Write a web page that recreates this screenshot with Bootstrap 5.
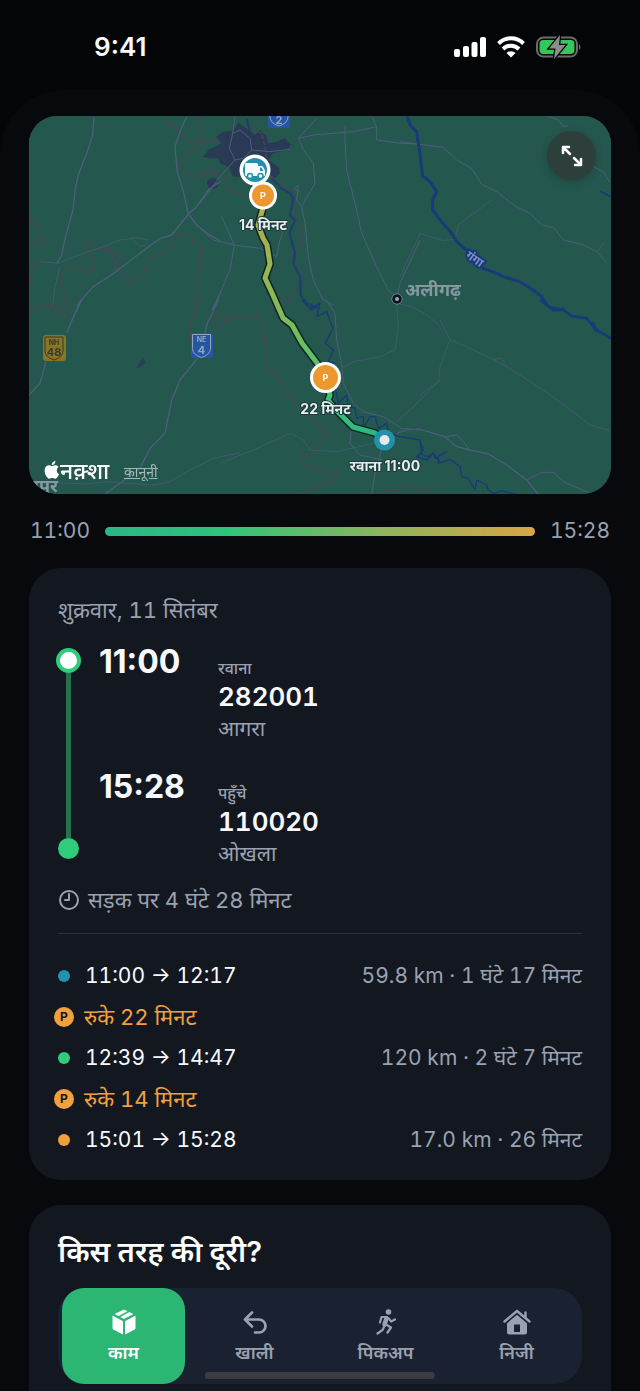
<!DOCTYPE html>
<html lang="hi" data-bs-theme="dark">
<head>
<meta charset="utf-8">
<meta name="viewport" content="width=device-width, initial-scale=1">
<title>यात्रा</title>
<link href="https://cdn.jsdelivr.net/npm/bootstrap@5.3.0/dist/css/bootstrap.min.css" rel="stylesheet">
<style>
  :root { --ink: #f8f9ff; --dim: #9aa1b1; --panel: #131820; --green: #2ecc7b; --amber: #f2a03d; --teal: #2391ab; }
  body { background: #030507; color: var(--ink); font-family: Inter, "Noto Sans", "Noto Sans Devanagari", sans-serif; font-size: 22px; line-height: 28px; }
  svg { display: block; }
  .status { height: 90px; padding: 4px 59px 0 94px; font-size: 26px; font-weight: 600; }
  .sheet { background: #08090d; border-radius: 64px 64px 0 0; padding: 26px 29px 0; }
  .map { border-radius: 28px; overflow: hidden; background: #24574e; }
  .map text { font-weight: 700; }
  .map .brand { font-weight: 500; }
  .expand { top: 15px; right: 15px; width: 49px; height: 49px; background: #2d3f3b; border: 0; box-shadow: 0 2px 8px #0003; }
  .legal { left: 95px; bottom: 12px; font-size: 14px; line-height: 20px; color: #a3bab6; }
  .span-row { height: 74px; gap: 15px; color: var(--dim); padding: 0 1px; font-size: 21px; }
  .span-bar { height: 9px; background: linear-gradient(90deg, #2cb587, #2fc47b 28%, #8fb45c 65%, #dba544); }
  .panel { background: var(--panel); border-radius: 32px; padding: 29px 29px 20px; margin-bottom: 25px; }
  .day { line-height: 26px; }
  .dim { color: var(--dim); }
  .rail { width: 25px; margin-left: -2px; padding: 1px 0 8px; }
  .ring { width: 25px; height: 25px; border: 4px solid var(--green); background: #fff; }
  .rail-line { width: 5px; background: #27704f; }
  .rail-end { width: 21px; height: 21px; background: var(--green); }
  .stops { gap: 30px; margin-left: 18px; }
  .clock { width: 119px; font-size: 32px; line-height: 30px; font-weight: 700; }
  .place { padding-top: 11px; }
  .place-kind { font-size: 16px; line-height: 20px; font-weight: 500; }
  .place-code { font-size: 26px; line-height: 38px; font-weight: 600; }
  .place-city { font-size: 21px; line-height: 26px; }
  .tnum { font-variant-numeric: tabular-nums; }
  .duration { margin-top: 19px; }
  .rule { height: 1px; background: #2a2f3a; margin: 19px 0 21px; }
  .leg { height: 41px; font-size: 21px; }
  .dot { width: 12px; height: 12px; margin-right: 15px; }
  .dot-teal { background: var(--teal); }
  .dot-green { background: var(--green); }
  .dot-amber { background: var(--amber); }
  .stop { color: var(--amber); margin-left: -4px; gap: 10px; font-size: 22px; }
  .pmark { width: 20px; height: 20px; background: var(--amber); color: var(--panel); font-size: 12px; line-height: 20px; font-weight: 700; }
  .ask { font-size: 29px; line-height: 36px; font-weight: 600; margin-bottom: 18px; }
  .seg { background: #1a2130; border-radius: 28px; }
  .seg .btn { --bs-btn-color: var(--dim); --bs-btn-border-width: 0; --bs-btn-hover-color: var(--ink); height: 96px; margin: 0 4px; padding: 21px 0 0; border-radius: 22px; font-size: 18px; line-height: 28px; font-weight: 600; }
  .seg .btn svg { margin: 0 auto 4px; }
  .seg .btn-check:checked + .btn { background: #2bb673; color: #fff; }
  .last { border-radius: 32px 32px 0 0; padding-bottom: 7px; margin-bottom: 0; }
  .home { height: 7px; width: 36%; background: #3a3c41; bottom: 12px; }
</style>
</head>
<body>
<header class="status d-flex align-items-center justify-content-between">
  <span>9:41</span>
  <span class="d-flex align-items-center">
    <svg width="128" height="24" viewBox="0 0 128 24" aria-hidden="true">
      <g fill="#fff"><rect x="1" y="14" width="6" height="8" rx="2"/><rect x="10" y="11" width="6" height="11" rx="2"/><rect x="18.500" y="7" width="6" height="15" rx="2"/><rect x="27" y="2" width="6" height="20" rx="2"/></g>
      <g fill="none" stroke="#fff" stroke-width="4"><path d="M45.500 8.500a17.500 17.500 0 0 1 25 0"/><path d="M50 14a11.500 11.500 0 0 1 16 0"/></g>
      <path d="M53.500 18a6.500 6.500 0 0 1 9 0L58 22.500z" fill="#fff"/>
      <rect x="84" y="2.500" width="40" height="19" rx="6.500" fill="none" stroke="#6a6c6c" stroke-width="2"/>
      <rect x="86.500" y="5" width="35" height="14" rx="4" fill="#34c759"/>
      <path d="M126 9q3 3 0 6z" fill="#6a6c6c"/>
      <path d="M107 0L96 13.500h6.500L101 24l11.500-14H106z" fill="#8c8e8e" stroke="#030507" stroke-width="2.500" paint-order="stroke"/>
    </svg>
  </span>
</header>
<main class="sheet">
  <section class="map position-relative">
    <svg viewBox="29 116 582 378" width="100%" role="img" aria-label="मार्ग का नक़्शा" font-family="Inter, 'Noto Sans', 'Noto Sans Devanagari', sans-serif">
      <defs>
        <linearGradient id="trip" gradientUnits="userSpaceOnUse" x1="263" y1="195" x2="384" y2="440"><stop offset="0" stop-color="#b8ad4c"/><stop offset=".45" stop-color="#7fbb5c"/><stop offset=".8" stop-color="#35c678"/><stop offset="1" stop-color="#2cb08a"/></linearGradient>
      </defs>
      <rect x="29" y="116" width="582" height="378" fill="#24574e"/>
      <!-- urban areas -->
      <g transform="translate(200 110) scale(.33333)" fill="#293a55">
        <path d="M8 140L25 120 65 100 48 80 70 65 100 62 115 38 145 60 165 75 180 60 200 80 205 100 230 95 255 85 272 105 262 120 220 130 205 150 235 170 240 190 225 205 205 190 190 200H100L85 170 60 160 55 145 30 145Z"/>
        <circle cx="38" cy="220" r="17"/>
      </g>
      <path d="M136 369l7-12 3 6-6 4z" fill="#293f5a"/>
      <!-- state and district borders -->
      <g fill="none" stroke="#5b3f58" stroke-width="5" stroke-dasharray="14 5" stroke-linejoin="round" opacity=".75">
        <g transform="translate(20 110) scale(.33333)">
          <path d="M30 325L50 350 65 375 82 412M65 375L40 412M30 515L40 470 58 455M435 30L470 60 500 90 545 95 600 92M540 20L545 60 530 120 500 125 480 170 500 195 540 200 570 180 600 195M140 485L175 465 205 490 225 470 215 430 190 405 205 395 235 420 260 415 285 450 300 480 330 520 375 500 385 450 430 425 455 410 460 380 490 370 520 390 545 420 540 470 528 500 535 560 530 600M125 490L130 540 145 600M265 420L295 430 300 450 280 470 300 485M30 595L90 585 130 600"/>
        </g>
        <g transform="translate(200 110) scale(.33333)">
          <path d="M140 20L155 55 185 70 195 110 200 150 205 190 250 230 285 255 278 300 292 345 305 370 308 400 290 400 275 440 295 480 300 540 270 545 265 575 200 600M0 190L30 185 75 200 90 240 120 255 160 260M0 470L8 410"/>
        </g>
        <g transform="translate(20 300) scale(.33333)"><path d="M27 30L80 15 130 50 155 40 140 10M530 0L535 20 515 50 510 120M575 50L600 45 635 60M580 70L605 90"/></g>
        <g transform="translate(220 300) scale(.33333)"><path d="M0 70L60 45 90 55 115 45 130 80 135 140 145 210 165 220 190 260 230 320 260 330 290 370 320 410 290 435 280 460 240 465 240 485 270 500 300 515 360 520 340 540 230 583M430 583L540 570 560 555 640 575"/></g>
      </g>
      <!-- roads -->
      <g fill="none" stroke="#4e5d7c" stroke-width="4" stroke-linejoin="round">
        <g transform="translate(20 110) scale(.33333)">
          <path d="M222 20L218 75 200 130 175 195 165 240 160 295 145 350 132 400 125 435 110 460M500 20L480 65 465 110 472 185 490 245 505 312 530 345 565 372 600 392M600 215L565 240 530 290 505 312 455 375 420 385 360 430 300 475 270 498 220 530 175 580 170 605M600 550L580 600"/>
          <path stroke-width="2" d="M60 455L115 460 190 430 250 410 300 390 350 383 385 390M335 385L360 410 375 405M120 470L105 530 98 585"/>
        </g>
        <g transform="translate(200 110) scale(.33333)">
          <path stroke-width="3" d="M105 20L98 70 120 60 150 85 155 120 130 145 105 150 88 115 98 70M105 150L60 200 0 280M155 120L210 125 270 118M350 25L295 85 310 120 340 160 345 220 305 290 315 340 325 440 340 510 370 570 400 585M295 85L340 75 460 65 530 50M435 50L435 90 440 180 470 300 485 370 530 470 565 540 590 565 600 520 660 390M515 20L530 50 530 90 600 100 660 102M0 355L40 390 103 405 180 415 230 440 240 390 255 350M65 320L103 405 90 480 60 550 35 600M305 290L290 270 295 225 280 235 300 245"/>
        </g>
        <g transform="translate(400 110) scale(.33333)">
          <path stroke-width="3" d="M0 95L60 103 130 112 170 150 215 175 245 223 290 245 345 288 390 310 425 345 460 352 490 390 550 405 590 425 622 460M445 20L475 30 490 50 505 48M580 170L610 185 628 215"/>
          <path stroke-width="2" d="M0 500L60 370 130 392 165 388 175 345 275 270M590 425L615 395"/>
        </g>
        <g transform="translate(20 300) scale(.33333)">
          <path d="M185 0L165 40 140 100M78 185L60 250 27 285M595 0L560 75 545 160 480 240 455 300 435 400 390 445 360 505 255 583"/>
          <path stroke-width="2" d="M100 548L200 552 260 545 400 555 450 545 500 515 580 475 660 458"/>
        </g>
        <g transform="translate(220 300) scale(.33333)">
          <path stroke-width="2" d="M530 10L535 80 525 150 480 170 400 185 365 205M530 10C600 20 640 60 660 80M660 240L570 330 530 365M0 490L100 450 200 405 215 400 250 420 270 450 350 455 460 430 530 405 545 385"/>
          <path stroke-width="3" d="M320 0L345 40 350 120 365 190 370 250 400 310 430 335 490 350 545 385 600 390M395 370L390 430 420 465 490 480M490 430L465 520 455 583M530 400L560 390 600 388"/>
        </g>
        <g transform="translate(420 300) scale(.33333)">
          <path stroke-width="2" d="M60 60L90 118 60 200 55 245 0 285M90 118L220 178 260 200 330 245 405 295 510 375 570 392M220 178L245 175 260 200"/>
          <path d="M-10 386L0 388 75 410 110 440 150 450 205 462 260 495 320 540 355 583"/><path stroke-width="3" d="M75 410L110 405 130 425 150 450M320 540L365 517 400 517 430 545 510 580"/>
        </g>
      </g>
      <!-- rivers -->
      <g fill="none" stroke="#183a78" stroke-width="5" stroke-linejoin="round">
        <g transform="translate(200 110) scale(.33333)"><path d="M140 25L150 70M215 205L245 235 270 250 280 265 270 315 285 330 268 370 285 430 280 460 300 500 302 555 320 580 352 592 330 600"/></g>
        <g transform="translate(400 110) scale(.33333)">
          <path stroke-width="9" d="M22 20L30 45 50 65 55 100 62 150 68 198 90 215 110 245 98 270 98 300 125 335 155 370 170 395 200 420 250 475 290 490 310 500 360 515 400 540 425 560 440 585 460 600 495 598M425 555L432 580"/>
          <path d="M600 243L632 260"/>
        </g>
        <g transform="translate(220 300) scale(.33333)">
          <path stroke-width="4" d="M245 0L270 25 300 10 290 50 320 35 335 75 340 85 315 130 340 150 325 185 345 190M345 255L355 310 380 285 385 320 405 325 410 355 430 350 430 385 450 350 465 350 475 385 500 370 505 400 540 410 600 420 605 460 590 470 620 480 640 460 660 485"/>
        </g>
        <g transform="translate(420 300) scale(.33333)">
          <path stroke-width="8" d="M360 0L390 22 430 30 455 48 500 55 530 90 573 115"/><path stroke-width="12" d="M515 68L530 92"/>
          <path stroke-width="4" d="M0 425L10 450 0 460 20 470 40 460 45 475 80 455 55 468 55 490 90 478 120 500 125 530 145 535 165 570 170 540 200 555 205 570 220 580 245 573 290 583"/>
        </g>
      </g>
      <!-- highway shields -->
      <rect x="268" y="104" width="22" height="24" rx="2" fill="#2456a4"/><path d="M270 112v5q0 6 9 9 9-3 9-9v-5" fill="none" stroke="#8fa6bd"/>
      <text x="279" y="124" font-size="11" fill="#8fa6bd" text-anchor="middle">2</text>
      <rect x="43" y="335" width="23" height="26" rx="3" fill="#8a7527"/><path d="M45 337h18v14q0 6-9 9-9-3-9-9z" fill="none" stroke="#343b2b"/>
      <g text-anchor="middle" fill="#343b2b"><text x="54" y="345" font-size="7">NH</text><text x="54" y="356" font-size="11">48</text></g>
      <rect x="191" y="333" width="22" height="25" rx="2" fill="#2456a4"/><path d="M192.500 334.500h18v14q0 6-9 9-9-3-9-9z" fill="none" stroke="#8fa6bd"/>
      <g text-anchor="middle" fill="#8fa6bd"><text x="201.500" y="342" font-size="7">NE</text><text x="201.500" y="354" font-size="11">4</text></g>
      <!-- place names -->
      <circle cx="397" cy="299" r="3.500" fill="#24574e" stroke="#10151f" stroke-width="3"/><circle cx="397" cy="299" r="2" fill="#93a6a8"/>
      <circle cx="397" cy="299" r="5.200" fill="none" stroke="#8398a0" stroke-width=".7"/>
      <text x="405" y="296" font-size="18" fill="#8398a0">अलीगढ़</text>
      <text x="0" y="0" transform="translate(465 257) rotate(35)" font-size="12" fill="#7c8fc0" stroke="#183a78" stroke-width="4" paint-order="stroke">गंगा</text>
      <text x="58" y="492" font-size="18" fill="#8398a0" text-anchor="end">जयपुर</text>
      <!-- route -->
      <g fill="none" stroke-linejoin="round" stroke-linecap="round">
        <path d="M263 195V208L258 225 263 238 267 245 270 264 265 278 272 293 283 318 292 325 302 343 317 363 326 378 330 395 328 400 338 412 353 427 375 433 384 440" stroke="#10251f" stroke-width="8"/>
        <path d="M263 195V208L258 225 263 238 267 245 270 264 265 278 272 293 283 318 292 325 302 343 317 363 326 378 330 395 328 400 338 412 353 427 375 433 384 440" stroke="url(#trip)" stroke-width="5"/>
      </g>
      <g text-anchor="middle">
        <circle cx="255" cy="170" r="15.500" fill="#fff"/><circle cx="255" cy="170" r="12" fill="#2391ab"/>
        <path d="M245 164.500q0-1.500 1.500-1.500h10q1.500 0 1.500 1.500V166h3.500q1 0 1.500.8l2 3.700V175q0 1-1 1h-17.500q-1.500 0-1.500-1.500z" fill="#fff"/>
        <path d="M260 167.500h1.500l1.800 3.500H260z" fill="#2391ab"/>
        <g fill="#fff" stroke="#2391ab" stroke-width="1.500"><circle cx="250" cy="176" r="2.500"/><circle cx="260.500" cy="176" r="2.500"/></g>
        <circle cx="263" cy="195.500" r="14" fill="#fff"/><circle cx="263" cy="195.500" r="11" fill="#ec9730"/>
        <text x="263" y="199" font-size="9" fill="#fff">P</text>
        <circle cx="325.500" cy="377.500" r="15.500" fill="#fff"/><circle cx="325.500" cy="377.500" r="12.500" fill="#ec9730"/>
        <text x="325.500" y="381" font-size="9" fill="#fff">P</text>
        <circle cx="384.500" cy="440" r="10.500" fill="#2391ab"/><circle cx="384.500" cy="440" r="5" fill="#e4eaee"/>
        <g font-size="14" fill="#e6ecef" stroke="#1b3a37" stroke-width="2" paint-order="stroke" stroke-linejoin="round">
          <text x="263" y="230">14 मिनट</text><text x="325.500" y="414">22 मिनट</text><text x="385" y="471">रवाना 11:00</text>
        </g>
      </g>
      <path transform="translate(43 461) scale(.74)" fill="#fff" d="M12.152 6.896c-.948 0-2.415-1.078-3.96-1.040-2.040.027-3.910 1.183-4.961 3.014-2.117 3.675-.546 9.103 1.519 12.090 1.013 1.454 2.208 3.090 3.792 3.039 1.520-.065 2.090-.987 3.935-.987 1.831 0 2.350.987 3.960.948 1.637-.026 2.676-1.480 3.676-2.948 1.156-1.688 1.636-3.325 1.662-3.415-.039-.013-3.182-1.221-3.220-4.857-.026-3.040 2.480-4.494 2.597-4.559-1.429-2.090-3.623-2.324-4.390-2.376-2-.156-3.675 1.090-4.610 1.090zM15.530 3.830c.843-1.012 1.400-2.427 1.245-3.830-1.207.052-2.662.805-3.532 1.818-.780.896-1.454 2.338-1.273 3.714 1.338.104 2.715-.688 3.559-1.701"/>
      <text class="brand" x="60" y="479" font-size="23" fill="#fff">नक़्शा</text>
    </svg>
    <button type="button" class="expand btn rounded-circle position-absolute p-0 d-flex align-items-center justify-content-center" aria-label="नक़्शा बड़ा करें">
      <svg width="22" height="22" viewBox="0 0 22 22" fill="none" stroke="#fff" stroke-width="2.500" stroke-linecap="round" stroke-linejoin="round"><path d="M2 8V2h6M2.500 2.500L9 9M20 14v6h-6M19.500 19.500L13 13"/></svg>
    </button>
    <a href="#" class="legal position-absolute">कानूनी</a>
  </section>

  <div class="span-row tnum d-flex align-items-center">
    <span>11:00</span><div class="span-bar flex-grow-1 rounded-pill"></div><span>15:28</span>
  </div>

  <section class="panel">
    <div class="day dim tnum">शुक्रवार, 11 सितंबर</div>
    <div class="d-flex mt-4">
      <div class="rail d-flex flex-column align-items-center">
        <span class="ring rounded-circle"></span><span class="rail-line flex-grow-1"></span><span class="rail-end rounded-circle"></span>
      </div>
      <div class="stops d-flex flex-column">
        <div class="d-flex">
          <div class="clock">11:00</div>
          <div class="place"><div class="place-kind dim">रवाना</div><div class="place-code tnum">282001</div><div class="place-city dim">आगरा</div></div>
        </div>
        <div class="d-flex">
          <div class="clock">15:28</div>
          <div class="place"><div class="place-kind dim">पहुँचे</div><div class="place-code tnum">110020</div><div class="place-city dim">ओखला</div></div>
        </div>
      </div>
    </div>
    <div class="duration dim tnum d-flex align-items-center">
      <svg class="me-2" width="22" height="22" viewBox="0 0 22 22" fill="none" stroke="currentColor" stroke-width="2" stroke-linecap="round" stroke-linejoin="round"><circle cx="11" cy="11" r="9"/><path d="M11 5v6H7"/></svg>
      <span>सड़क पर 4 घंटे 28 मिनट</span>
    </div>
    <div class="rule"></div>
    <div class="legs tnum">
      <div class="leg d-flex align-items-center"><span class="dot dot-teal rounded-circle"></span><span>11:00 → 12:17</span><span class="dim ms-auto">59.8 km · 1 घंटे 17 मिनट</span></div>
      <div class="leg stop d-flex align-items-center"><span class="pmark rounded-circle text-center">P</span><span>रुके 22 मिनट</span></div>
      <div class="leg d-flex align-items-center"><span class="dot dot-green rounded-circle"></span><span>12:39 → 14:47</span><span class="dim ms-auto">120 km · 2 घंटे 7 मिनट</span></div>
      <div class="leg stop d-flex align-items-center"><span class="pmark rounded-circle text-center">P</span><span>रुके 14 मिनट</span></div>
      <div class="leg d-flex align-items-center"><span class="dot dot-amber rounded-circle"></span><span>15:01 → 15:28</span><span class="dim ms-auto">17.0 km · 26 मिनट</span></div>
    </div>
  </section>

  <section class="panel last">
    <h2 class="ask">किस तरह की दूरी?</h2>
    <div class="seg row row-cols-4 g-0">
      <div class="col d-grid"><input class="btn-check" type="radio" name="kind" id="k1" checked><label class="btn" for="k1">
        <svg width="26" height="26" viewBox="0 0 26 26" fill="currentColor"><path d="M13 .5l3.600 1.700-9 4.800L3.500 5zM18.300 3L22.500 5 13 10 9.300 8zM1.500 6.500L12 12.200V25.500L2.600 20.700Q1.500 20 1.500 19zM24.500 6.500L14 12.200V25.500l9.400-4.800q1.100-.7 1.100-1.700z"/></svg>काम</label></div>
      <div class="col d-grid"><input class="btn-check" type="radio" name="kind" id="k2"><label class="btn" for="k2">
        <svg width="26" height="26" viewBox="0 0 26 26" fill="none" stroke="currentColor" stroke-width="2.700" stroke-linecap="round" stroke-linejoin="round"><path d="M10 3.500L3 10.500l7 7M3.500 10.500H17a6.500 6.500 0 0 1 0 13h-4"/></svg>खाली</label></div>
      <div class="col d-grid"><input class="btn-check" type="radio" name="kind" id="k3"><label class="btn" for="k3">
        <svg width="26" height="26" viewBox="0 0 26 26" fill="none" stroke="currentColor" stroke-width="2.200" stroke-linecap="round" stroke-linejoin="round"><circle cx="15.500" cy="3" r="2.800" fill="currentColor" stroke="none"/><path d="M7 13.500L8.500 8H14M16 9.500l2 3 4-2M11.500 17l-2 4-5 3.500M13 15.500l5 3-3.500 5"/><path d="M13.500 9.500l-2 6" stroke-width="4.500"/></svg>पिकअप</label></div>
      <div class="col d-grid"><input class="btn-check" type="radio" name="kind" id="k4"><label class="btn" for="k4">
        <svg width="28" height="26" viewBox="0 0 28 26"><path d="M1.500 12.500L14 2l12.500 10.500M22.500 3.500V8" fill="none" stroke="currentColor" stroke-width="2.400" stroke-linecap="round" stroke-linejoin="round"/><path d="M14 5.800l10 8.400V23q0 2.500-2.500 2.500h-15Q4 25.500 4 23v-8.800zM11 15.500V23h6v-7.500z" fill="currentColor" fill-rule="evenodd"/></svg>निजी</label></div>
    </div>
  </section>
</main>
<div class="home position-fixed start-50 translate-middle-x rounded-pill"></div>
<script src="https://cdn.jsdelivr.net/npm/bootstrap@5.3.0/dist/js/bootstrap.bundle.min.js"></script>
</body>
</html>
